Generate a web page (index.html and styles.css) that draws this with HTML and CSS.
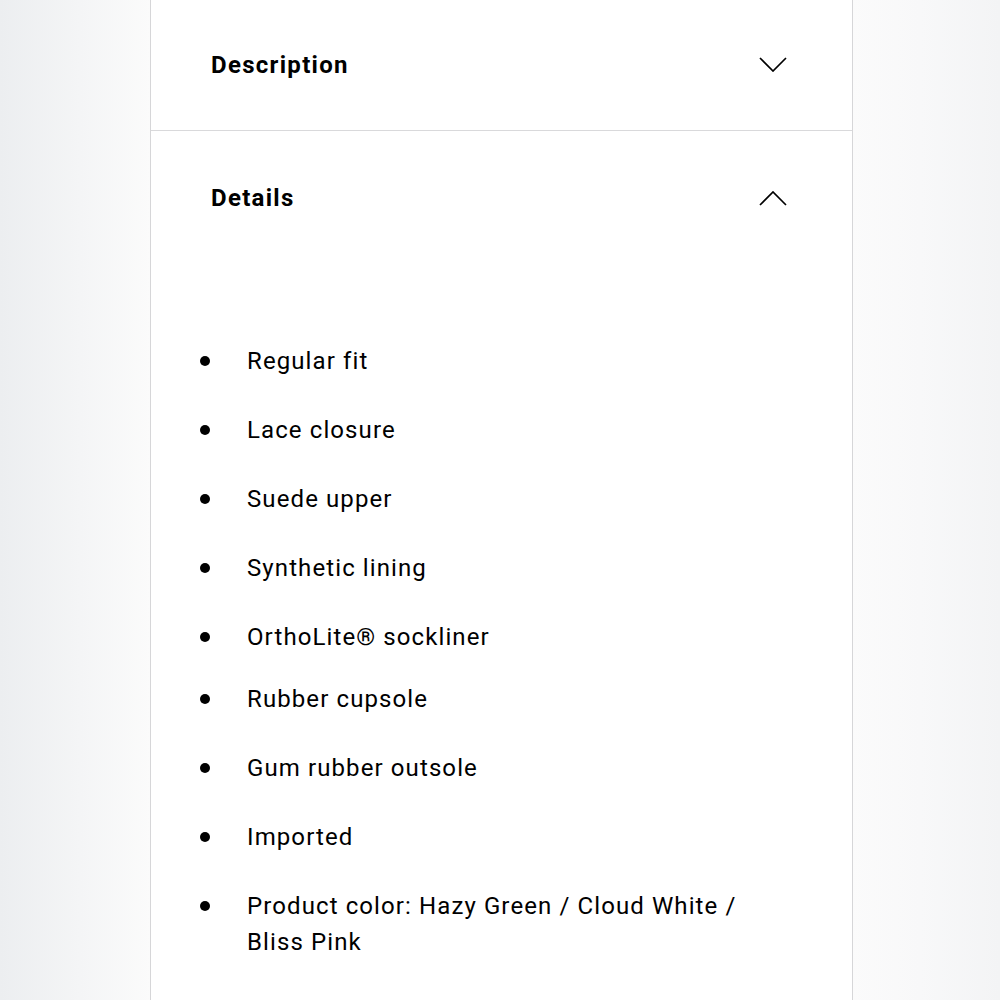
FILE: index.html
```html
<!DOCTYPE html>
<html lang="en">
<head>
<meta charset="utf-8">
<title>Product details</title>
<link rel="stylesheet" href="styles.css">
</head>
<body>
<main class="panel">
  <section class="acc">
    <div class="acc-head acc-head--first">
      <h2 class="acc-title">Description</h2>
      <svg class="chev" width="28" height="15" viewBox="0 0 28 15" aria-hidden="true"><path d="M1 1 L14 14 L27 1" fill="none" stroke="#000" stroke-width="1.7"/></svg>
    </div>
  </section>
  <section class="acc acc--open">
    <div class="acc-head">
      <h2 class="acc-title">Details</h2>
      <svg class="chev" width="28" height="15" viewBox="0 0 28 15" aria-hidden="true"><path d="M1 14 L14 1 L27 14" fill="none" stroke="#000" stroke-width="1.7"/></svg>
    </div>
    <ul class="list">
      <li>Regular fit</li>
      <li>Lace closure</li>
      <li>Suede upper</li>
      <li>Synthetic lining</li>
      <li class="tight">OrthoLite® sockliner</li>
      <li>Rubber cupsole</li>
      <li>Gum rubber outsole</li>
      <li>Imported</li>
      <li>Product color: Hazy Green / Cloud White / Bliss Pink</li>
    </ul>
  </section>
</main>
</body>
</html>
```

FILE: styles.css
```css
html, body {
  margin: 0;
  height: 100%;
}
body {
  background:
    linear-gradient(90deg, #eceef0 0%, #f4f5f6 8%, #fbfbfb 15%, #fbfbfb 85%, #f8f8f9 92%, #f3f4f5 100%);
  font-family: Roboto, "Noto Sans", sans-serif;
  color: #000;
  overflow: hidden;
}
.panel {
  width: 701px;
  margin: -1px 0 0 150px;
  background: #fff;
  border-left: 1px solid #d6d6d8;
  border-right: 1px solid #d6d6d8;
  min-height: 1010px;
}
.acc {
  border-bottom: 1px solid #d9d9db;
}
.acc--open {
  border-bottom: none;
}
.acc-head {
  height: 134px;
  display: flex;
  align-items: center;
  justify-content: space-between;
  padding: 0 65px 0 60px;
}
.acc-head--first {
  height: 131px;
}
.acc-title {
  margin: 0;
  font-size: 24px;
  font-weight: 700;
  letter-spacing: 1.3px;
}
.chev {
  display: block;
}
.list {
  list-style: none;
  margin: 0;
  padding: 78px 100px 0 49px;
}
.list li {
  display: flex;
  font-size: 24px;
  line-height: 36px;
  letter-spacing: 1.1px;
  margin-bottom: 33px;
}
.list li::before {
  content: "";
  flex: none;
  width: 10px;
  height: 10px;
  border-radius: 50%;
  background: #000;
  margin: 13px 37px 0 0;
}
.list li.tight {
  margin-bottom: 26px;
}
```
